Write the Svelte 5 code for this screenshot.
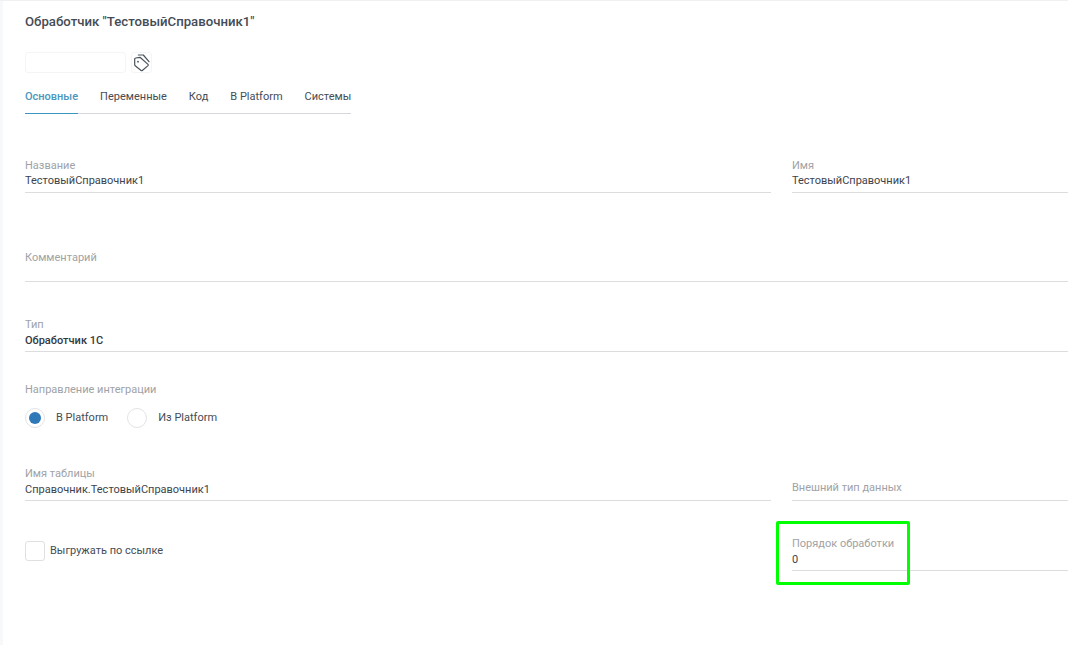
<script>
  const tabs = ['Основные', 'Переменные', 'Код', 'В Platform', 'Системы'];
</script>

<div class="page">
  <h1 class="title">Обработчик "ТестовыйСправочник1"</h1>
  <div class="tagrow">
    <div class="tagbox"></div>
    <div class="tagbtn">
      <svg width="19" height="19" viewBox="0 0 19 19" fill="none" stroke="#4a525b" stroke-width="1.2" stroke-linejoin="round" stroke-linecap="round">
        <path d="M3.6 5 L8 4.3 L16 11.4 Q16.6 12 16 12.6 L10.3 17.5 Q9.7 18 9.1 17.5 L3.2 12.8 Q2.7 12.4 2.7 11.8 L2.7 5.9 Q2.8 5.1 3.6 5 Z" />
        <path d="M6.3 2 L11.3 2 L17 8.7" />
        <circle cx="6" cy="8.7" r="0.9" fill="#4a525b" stroke="none" />
      </svg>
    </div>
  </div>
  <nav class="tabs">
    {#each tabs as t, i}
      <span class="tab" class:active={i === 0}>{t}</span>
    {/each}
  </nav>

  <div class="row r1">
    <div class="field wide"><span class="lab">Название</span><span class="val">ТестовыйСправочник1</span></div>
    <div class="field side"><span class="lab">Имя</span><span class="val">ТестовыйСправочник1</span></div>
  </div>
  <div class="field comment"><span class="lab">Комментарий</span></div>
  <div class="field type"><span class="lab">Тип</span><span class="val strong">Обработчик 1С</span></div>

  <div class="dir">
    <div class="lab">Направление интеграции</div>
    <div class="radios">
      <span class="radio on"></span><span class="rtext first">В Platform</span>
      <span class="radio"></span><span class="rtext">Из Platform</span>
    </div>
  </div>

  <div class="row r2">
    <div class="field wide"><span class="lab">Имя таблицы</span><span class="val">Справочник.ТестовыйСправочник1</span></div>
    <div class="field side empty"><span class="lab">Внешний тип данных</span></div>
  </div>

  <div class="row r3">
    <div class="wide check"><span class="box"></span><span class="rtext">Выгружать по ссылке</span></div>
    <div class="field side order">
      <span class="lab">Порядок обработки</span><span class="val">0</span>
      <div class="mark"></div>
    </div>
  </div>
</div>

<style>
  :global(body) { margin: 0; background: #fff; overflow: hidden; }
  .page {
    box-sizing: border-box;
    width: 1068px;
    height: 645px;
    padding: 1px 0 0 25px;
    font-family: Roboto, "Liberation Sans", sans-serif;
    font-size: 11px;
    color: #3d444c;
    background: #fff;
    border-top: 1px solid #eef0f2;
    box-shadow: inset 3px 0 0 #f7f8fa;
    overflow: hidden;
  }
  .title { margin: 11px 0 0; font-size: 13.2px; line-height: 17px; font-weight: 500; color: #454c55; }
  .tagrow { display: flex; gap: 5px; margin-top: 22px; }
  .tagbox { width: 99px; height: 19px; border: 1px solid #f4f5f6; border-radius: 3px; }
  .tagbtn { width: 19px; height: 19px; border: 1px solid #f4f5f6; border-radius: 3px; display: flex; align-items: center; justify-content: center; }
  .tabs { display: flex; gap: 22px; width: 326px; margin-top: 8px; height: 32px; border-bottom: 1px solid #d5d7da; }
  .tab { line-height: 32px; height: 32px; color: #454c54; white-space: nowrap; }
  .tab.active { color: #4a97c0; font-weight: 500; border-bottom: 1px solid #3a97c4; }
  .row { display: flex; gap: 21px; }
  .wide { width: 746px; flex: none; }
  .side { width: 276px; flex: none; }
  .field { display: flex; flex-direction: column; border-bottom: 1px solid #dcdddf; box-sizing: border-box; position: relative; }
  .lab { color: #a0a2a6; line-height: 14px; }
  .val { color: #3d444c; line-height: 15px; margin-top: 1px; }
  .strong { font-weight: 500; color: #33393f; }
  .r1 { margin-top: 44px; }
  .r1 .field { height: 35px; padding-top: 1px; }
  .r1 .val { margin-top: 0; }
  .comment { margin-top: 50px; height: 39px; padding-top: 8px; width: 1043px; }
  .type { margin-top: 35px; height: 35px; padding-top: 1px; width: 1043px; }
  .dir { margin-top: 31px; }
  .radios { display: flex; align-items: center; margin-top: 11px; }
  .radio { width: 18px; height: 18px; border: 1px solid #e2e3e5; border-radius: 50%; position: relative; flex: none; }
  .radio.on::after { content: ""; position: absolute; left: 3px; top: 3px; width: 12px; height: 12px; border-radius: 50%; background: #2f79b9; }
  .rtext { color: #454c54; line-height: 20px; margin-left: 11px; white-space: nowrap; }
  .rtext.first { margin-right: 19px; }
  .r2 { margin-top: 38px; }
  .r2 .field { height: 35px; padding-top: 1px; }
  .r2 .side.empty { padding-top: 15px; }
  .r3 { margin-top: 20px; }
  .check { display: flex; align-items: center; padding-top: 20px; height: 20px; }
  .box { width: 18px; height: 18px; border: 1px solid #dfe0e2; border-radius: 3px; flex: none; }
  .check .rtext { margin-left: 5px; }
  .order { height: 50px; padding-top: 16px; }
  .mark { position: absolute; left: -16px; top: 0; width: 134px; height: 64px; box-sizing: border-box; border: 3px solid #00ff00; border-radius: 2px; }
</style>
